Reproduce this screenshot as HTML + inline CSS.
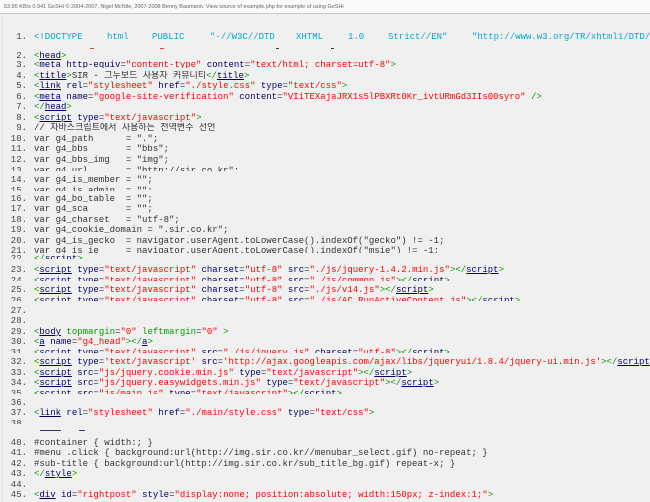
<!DOCTYPE html>
<html><head><meta charset="utf-8"><style>
body{margin:0;width:650px;height:502px;overflow:hidden;background:#f0f0f0;position:relative;font-family:"Liberation Mono","Noto Sans CJK KR",monospace;font-size:9px;}
#bar{position:absolute;left:0;top:0;width:650px;height:14px;background:#fafafa;border-bottom:1px solid #c8c8c8;font-family:"Liberation Sans",sans-serif;font-size:5.5px;color:#666;line-height:14px;padding-left:4px;box-sizing:border-box;white-space:nowrap;overflow:hidden}
#edge{position:absolute;left:2px;top:15px;width:1px;height:487px;background:#e4e4e4}
.l{position:absolute;left:0;width:650px;height:11px;line-height:11px;white-space:pre;color:#333;overflow:hidden}
.c{height:5px}
.n{display:inline-block;width:27px;text-align:right;color:#444;margin-right:7px}
.g{color:#009900}.t{color:#000066;text-decoration:underline}.a{color:#000066}.v{color:#ff0000}.d{color:#00aacc}
.w{position:absolute;top:0}
.m{position:absolute;height:1px}
</style></head><body>
<div id="bar">53.95 KB/s 0.941 GeSHi © 2004-2007, Nigel McNile, 2007-2008 Benny Baumann. View source of example.php for example of using GeSHi</div>
<div id="edge"></div>
<div class="l" style="top:32px"><span class="n">1.</span><span class="d w" style="left:34px">&lt;!DOCTYPE</span><span class="d w" style="left:107px">html</span><span class="d w" style="left:152px">PUBLIC</span><span class="d w" style="left:210px">"-//W3C//DTD</span><span class="d w" style="left:296px">XHTML</span><span class="d w" style="left:348px">1.0</span><span class="d w" style="left:388px">Strict//EN"</span><span class="d w" style="left:472px">"http://www.w3.org/TR/xhtml1/DTD/xhtml1-strict.dtd"&gt;</span></div>
<div class="m" style="top:48px;left:90px;width:4px;background:#f33"></div>
<div class="m" style="top:48px;left:160px;width:4px;background:#f33"></div>
<div class="m" style="top:48px;left:276px;width:3px;background:#336"></div>
<div class="m" style="top:48px;left:331px;width:3px;background:#336"></div>
<div class="l" style="top:51px"><span class="n">2.</span><span class="g">&lt;</span><span class="t">head</span><span class="g">&gt;</span></div>
<div class="l" style="top:60px;height:8px"><span class="n">3.</span><span class="g">&lt;</span><span class="t">meta</span> <span class="a">http-equiv</span>=<span class="v">"content-type"</span> <span class="a">content</span>=<span class="v">"text/html; charset=utf-8"</span><span class="g">&gt;</span></div>
<div class="l" style="top:71px"><span class="n">4.</span><span class="g">&lt;</span><span class="t">title</span><span class="g">&gt;</span>SIR - 그누보드 사용자 커뮤니티<span class="g">&lt;/</span><span class="t">title</span><span class="g">&gt;</span></div>
<div class="l" style="top:81px"><span class="n">5.</span><span class="g">&lt;</span><span class="t">link</span> <span class="a">rel</span>=<span class="v">"stylesheet"</span> <span class="a">href</span>=<span class="v">"./style.css"</span> <span class="a">type</span>=<span class="v">"text/css"</span><span class="g">&gt;</span></div>
<div class="l" style="top:92px"><span class="n">6.</span><span class="g">&lt;</span><span class="t">meta</span> <span class="a">name</span>=<span class="v">"google-site-verification"</span> <span class="a">content</span>=<span class="v">"VIiTEXajaJRX1s5lPBXRt0Kr_ivtURmGd3IIs00syro"</span> <span class="g">/&gt;</span></div>
<div class="l" style="top:102px"><span class="n">7.</span><span class="g">&lt;/</span><span class="t">head</span><span class="g">&gt;</span></div>
<div class="l" style="top:113px"><span class="n">8.</span><span class="g">&lt;</span><span class="t">script</span> <span class="a">type</span>=<span class="v">"text/javascript"</span><span class="g">&gt;</span></div>
<div class="l" style="top:123px"><span class="n">9.</span>// 자바스크립트에서 사용하는 전역변수 선언</div>
<div class="l" style="top:134px"><span class="n">10.</span>var g4_path      = ".";</div>
<div class="l" style="top:144px"><span class="n">11.</span>var g4_bbs       = "bbs";</div>
<div class="l" style="top:155px"><span class="n">12.</span>var g4_bbs_img   = "img";</div>
<div class="l c" style="top:166px"><span class="n">13.</span>var g4_url       = "http://sir.co.kr";</div>
<div class="l" style="top:175px"><span class="n">14.</span>var g4_is_member = "";</div>
<div class="l c" style="top:186px"><span class="n">15.</span>var g4_is_admin  = "";</div>
<div class="l" style="top:194px"><span class="n">16.</span>var g4_bo_table  = "";</div>
<div class="l" style="top:204px"><span class="n">17.</span>var g4_sca       = "";</div>
<div class="l" style="top:215px"><span class="n">18.</span>var g4_charset   = "utf-8";</div>
<div class="l" style="top:225px"><span class="n">19.</span>var g4_cookie_domain = ".sir.co.kr";</div>
<div class="l" style="top:236px"><span class="n">20.</span>var g4_is_gecko  = navigator.userAgent.toLowerCase().indexOf("gecko") != -1;</div>
<div class="l c" style="top:246px;height:7px"><span class="n">21.</span>var g4_is_ie     = navigator.userAgent.toLowerCase().indexOf("msie") != -1;</div>
<div class="l c" style="top:254px"><span class="n">22.</span><span class="g">&lt;/</span><span class="t">script</span><span class="g">&gt;</span></div>
<div class="l" style="top:265px"><span class="n">23.</span><span class="g">&lt;</span><span class="t">script</span> <span class="a">type</span>=<span class="v">"text/javascript"</span> <span class="a">charset</span>=<span class="v">"utf-8"</span> <span class="a">src</span>=<span class="v">"./js/jquery-1.4.2.min.js"</span><span class="g">&gt;&lt;/</span><span class="t">script</span><span class="g">&gt;</span></div>
<div class="l c" style="top:276px"><span class="n">24.</span><span class="g">&lt;</span><span class="t">script</span> <span class="a">type</span>=<span class="v">"text/javascript"</span> <span class="a">charset</span>=<span class="v">"utf-8"</span> <span class="a">src</span>=<span class="v">"./js/common.js"</span><span class="g">&gt;&lt;/</span><span class="t">script</span><span class="g">&gt;</span></div>
<div class="l" style="top:285px"><span class="n">25.</span><span class="g">&lt;</span><span class="t">script</span> <span class="a">type</span>=<span class="v">"text/javascript"</span> <span class="a">charset</span>=<span class="v">"utf-8"</span> <span class="a">src</span>=<span class="v">"./js/v14.js"</span><span class="g">&gt;&lt;/</span><span class="t">script</span><span class="g">&gt;</span></div>
<div class="l c" style="top:296px"><span class="n">26.</span><span class="g">&lt;</span><span class="t">script</span> <span class="a">type</span>=<span class="v">"text/javascript"</span> <span class="a">charset</span>=<span class="v">"utf-8"</span> <span class="a">src</span>=<span class="v">"./js/AC_RunActiveContent.js"</span><span class="g">&gt;&lt;/</span><span class="t">script</span><span class="g">&gt;</span></div>
<div class="l" style="top:306px"><span class="n">27.</span></div>
<div class="l" style="top:316px"><span class="n">28.</span></div>
<div class="l" style="top:327px"><span class="n">29.</span><span class="g">&lt;</span><span class="t">body</span> <span class="g">topmargin</span>=<span class="v">"0"</span> <span class="g">leftmargin</span>=<span class="v">"0"</span> <span class="g">&gt;</span></div>
<div class="l" style="top:337px"><span class="n">30.</span><span class="g">&lt;</span><span class="t">a</span> <span class="a">name</span>=<span class="v">"g4_head"</span><span class="g">&gt;&lt;/</span><span class="t">a</span><span class="g">&gt;</span></div>
<div class="l c" style="top:348px"><span class="n">31.</span><span class="g">&lt;</span><span class="t">script</span> <span class="a">type</span>=<span class="v">"text/javascript"</span> <span class="a">src</span>=<span class="v">"./js/jquery.js"</span> <span class="a">charset</span>=<span class="v">"utf-8"</span><span class="g">&gt;&lt;/</span><span class="t">script</span><span class="g">&gt;</span></div>
<div class="l" style="top:357px"><span class="n">32.</span><span class="g">&lt;</span><span class="t">script</span> <span class="a">type</span>=<span class="v">'text/javascript'</span> <span class="a">src</span>=<span class="v">'http://ajax.googleapis.com/ajax/libs/jqueryui/1.8.4/jquery-ui.min.js'</span><span class="g">&gt;&lt;/</span><span class="t">script</span><span class="g">&gt;</span></div>
<div class="l" style="top:368px"><span class="n">33.</span><span class="g">&lt;</span><span class="t">script</span> <span class="a">src</span>=<span class="v">"js/jquery.cookie.min.js"</span> <span class="a">type</span>=<span class="v">"text/javascript"</span><span class="g">&gt;&lt;/</span><span class="t">script</span><span class="g">&gt;</span></div>
<div class="l" style="top:378px"><span class="n">34.</span><span class="g">&lt;</span><span class="t">script</span> <span class="a">src</span>=<span class="v">"js/jquery.easywidgets.min.js"</span> <span class="a">type</span>=<span class="v">"text/javascript"</span><span class="g">&gt;&lt;/</span><span class="t">script</span><span class="g">&gt;</span></div>
<div class="l c" style="top:389px"><span class="n">35.</span><span class="g">&lt;</span><span class="t">script</span> <span class="a">src</span>=<span class="v">"js/main.js"</span> <span class="a">type</span>=<span class="v">"text/javascript"</span><span class="g">&gt;&lt;/</span><span class="t">script</span><span class="g">&gt;</span></div>
<div class="l" style="top:398px"><span class="n">36.</span></div>
<div class="l" style="top:408px"><span class="n">37.</span><span class="g">&lt;</span><span class="t">link</span> <span class="a">rel</span>=<span class="v">"stylesheet"</span> <span class="a">href</span>=<span class="v">"./main/style.css"</span> <span class="a">type</span>=<span class="v">"text/css"</span><span class="g">&gt;</span></div>
<div class="l c" style="top:419px"><span class="n">38.</span></div>
<div class="m" style="top:430px;left:40px;width:21px;background:#336"></div>
<div class="m" style="top:430px;left:79px;width:6px;background:#336"></div>
<div class="l" style="top:438px"><span class="n">40.</span>#container { width:; }</div>
<div class="l" style="top:448px"><span class="n">41.</span>#menu .click { background:url(http://img.sir.co.kr//menubar_select.gif) no-repeat; }</div>
<div class="l" style="top:459px"><span class="n">42.</span>#sub-title { background:url(http://img.sir.co.kr/sub_title_bg.gif) repeat-x; }</div>
<div class="l" style="top:469px"><span class="n">43.</span><span class="g">&lt;/</span><span class="t">style</span><span class="g">&gt;</span></div>
<div class="l" style="top:480px"><span class="n">44.</span></div>
<div class="l" style="top:490px"><span class="n">45.</span><span class="g">&lt;</span><span class="t">div</span> <span class="a">id</span>=<span class="v">"rightpost"</span> <span class="a">style</span>=<span class="v">"display:none; position:absolute; width:150px; z-index:1;"</span><span class="g">&gt;</span></div>
</body></html>
